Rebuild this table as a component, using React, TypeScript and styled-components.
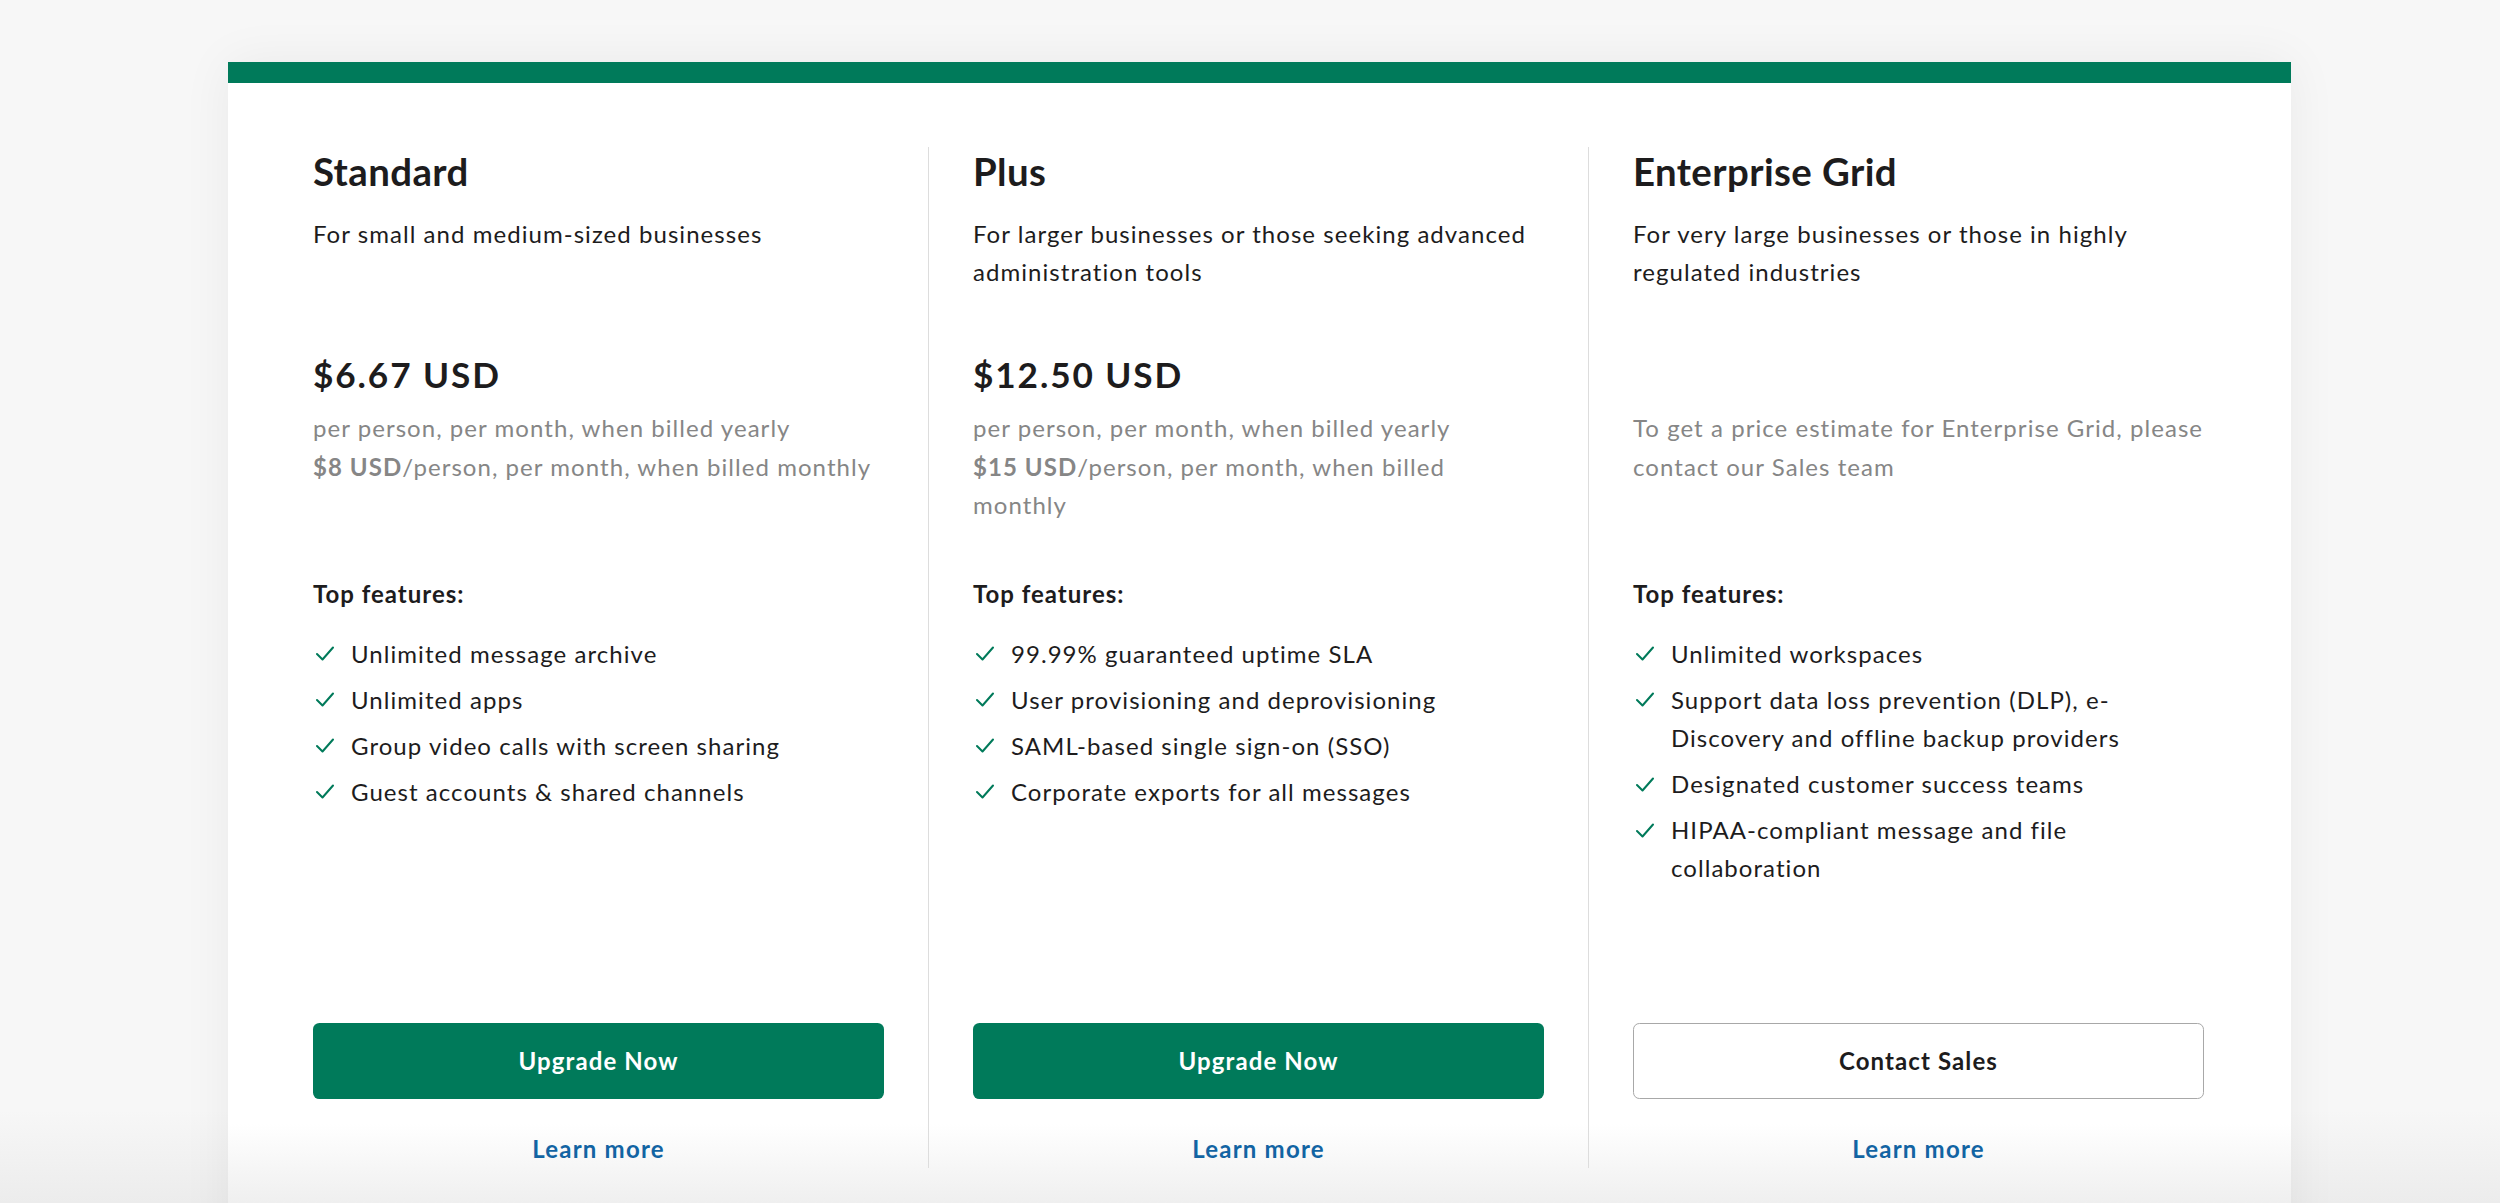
import React from "react";
import styled, { createGlobalStyle } from "styled-components";

const green = "#007a5a";
const ink = "#1d1c1d";
const muted = "#868686";

const GlobalStyle = createGlobalStyle`
  html, body {
    margin: 0;
    padding: 0;
    height: 100%;
    overflow: hidden;
  }
  body {
    background: linear-gradient(to bottom, #f7f7f7 1110px, #ececec 1203px);
    font-family: Lato, "Noto Sans", "Liberation Sans", sans-serif;
    color: ${ink};
    -webkit-font-smoothing: antialiased;
  }
`;

interface Plan {
  name: string;
  description: string;
  price?: string;
  note: React.ReactNode;
  features: string[];
  action: string;
  primary: boolean;
}

const plans: Plan[] = [
  {
    name: "Standard",
    description: "For small and medium-sized businesses",
    price: "$6.67 USD",
    note: (
      <>
        per person, per month, when billed yearly
        <br />
        <b>$8 USD</b>/person, per month, when billed monthly
      </>
    ),
    features: [
      "Unlimited message archive",
      "Unlimited apps",
      "Group video calls with screen sharing",
      "Guest accounts & shared channels",
    ],
    action: "Upgrade Now",
    primary: true,
  },
  {
    name: "Plus",
    description: "For larger businesses or those seeking advanced administration tools",
    price: "$12.50 USD",
    note: (
      <>
        per person, per month, when billed yearly
        <br />
        <b>$15 USD</b>/person, per month, when billed
        <br />
        monthly
      </>
    ),
    features: [
      "99.99% guaranteed uptime SLA",
      "User provisioning and deprovisioning",
      "SAML-based single sign-on (SSO)",
      "Corporate exports for all messages",
    ],
    action: "Upgrade Now",
    primary: true,
  },
  {
    name: "Enterprise Grid",
    description: "For very large businesses or those in highly regulated industries",
    note: "To get a price estimate for Enterprise Grid, please contact our Sales team",
    features: [
      "Unlimited workspaces",
      "Support data loss prevention (DLP), e-Discovery and offline backup providers",
      "Designated customer success teams",
      "HIPAA-compliant message and file collaboration",
    ],
    action: "Contact Sales",
    primary: false,
  },
];

const Page = styled.div`
  padding: 62px 0 0 228px;
`;

// the page fades out toward the bottom edge of the viewport
const Card = styled.section`
  width: 2063px;
  background: linear-gradient(to bottom, #ffffff 1062px, #efefef 1141px);
  box-shadow: 0 0 48px rgba(0, 0, 0, 0.06);
`;

const TopBar = styled.div`
  height: 21px;
  background: ${green};
`;

const Columns = styled.div`
  display: grid;
  grid-template-columns: repeat(3, 660px);
  padding: 64px 40px 80px;
`;

const Column = styled.div<{ $divided: boolean }>`
  display: flex;
  flex-direction: column;
  min-height: 1021px;
  padding: 0 44px;
  border-left: 1px solid ${({ $divided }) => ($divided ? "#dddddd" : "transparent")};
`;

const PlanName = styled.h2`
  margin: 0;
  font-size: 38.4px;
  line-height: 48px;
  font-weight: 700;
  letter-spacing: 0.4px;
  color: ${ink};
`;

const PlanDesc = styled.p`
  margin: 20px 0 0;
  min-height: 76.8px;
  font-size: 24px;
  line-height: 38.4px;
  letter-spacing: 1.05px;
`;

const Price = styled.div`
  margin-top: 61.6px;
  min-height: 42px;
  font-size: 35.2px;
  line-height: 42px;
  font-weight: 700;
  letter-spacing: 1.9px;
`;

const PriceNote = styled.p`
  margin: 14px 0 0;
  min-height: 115.2px;
  font-size: 24px;
  line-height: 38.4px;
  letter-spacing: 1.05px;
  color: ${muted};

  b {
    font-weight: 700;
  }
`;

const FeaturesLabel = styled.h3`
  margin: 50px 0 0;
  font-size: 24px;
  line-height: 38.4px;
  font-weight: 700;
  letter-spacing: 1px;
`;

const FeatureList = styled.ul`
  list-style: none;
  margin: 21.6px 0 0;
  padding: 0;
  display: flex;
  flex-direction: column;
  gap: 7.6px;
`;

const FeatureItem = styled.li`
  display: flex;
  align-items: flex-start;
  font-size: 24px;
  line-height: 38.4px;
  letter-spacing: 1.05px;
`;

const CheckBox = styled.span`
  flex: 0 0 38px;
  height: 38.4px;
  display: flex;
  align-items: center;
  padding-left: 3px;
  box-sizing: border-box;
`;

const Actions = styled.div`
  margin-top: auto;
  display: flex;
  flex-direction: column;
  align-items: stretch;
`;

const ActionButton = styled.button<{ $primary: boolean }>`
  height: 76px;
  border-radius: 6.4px;
  font-family: inherit;
  font-size: 24px;
  font-weight: 700;
  letter-spacing: 1.1px;
  cursor: pointer;
  background: ${({ $primary }) => ($primary ? green : "#fff")};
  color: ${({ $primary }) => ($primary ? "#fff" : ink)};
  border: ${({ $primary }) => ($primary ? "none" : "1.5px solid #a8a8a8")};
`;

const LearnMore = styled.a`
  margin-top: 31px;
  text-align: center;
  font-size: 24px;
  line-height: 38.4px;
  font-weight: 700;
  letter-spacing: 1.2px;
  color: #1264a3;
  text-decoration: none;
`;

const Check = () => (
  <svg width="18" height="15" viewBox="0 0 18 15" fill="none">
    <polyline
      points="1,8 6.5,13.5 17,1.5"
      stroke={green}
      strokeWidth="2"
      strokeLinecap="round"
      strokeLinejoin="round"
    />
  </svg>
);

const App: React.FC = () => {
  return (
    <>
      <GlobalStyle />
      <Page>
        <Card>
          <TopBar />
          <Columns>
            {plans.map((plan, i) => (
              <Column key={plan.name} $divided={i > 0}>
                <PlanName>{plan.name}</PlanName>
                <PlanDesc>{plan.description}</PlanDesc>
                <Price>{plan.price}</Price>
                <PriceNote>{plan.note}</PriceNote>
                <FeaturesLabel>Top features:</FeaturesLabel>
                <FeatureList>
                  {plan.features.map((f) => (
                    <FeatureItem key={f}>
                      <CheckBox>
                        <Check />
                      </CheckBox>
                      <span>{f}</span>
                    </FeatureItem>
                  ))}
                </FeatureList>
                <Actions>
                  <ActionButton $primary={plan.primary}>{plan.action}</ActionButton>
                  <LearnMore href="#learn">Learn more</LearnMore>
                </Actions>
              </Column>
            ))}
          </Columns>
        </Card>
      </Page>
    </>
  );
};

export default App;
